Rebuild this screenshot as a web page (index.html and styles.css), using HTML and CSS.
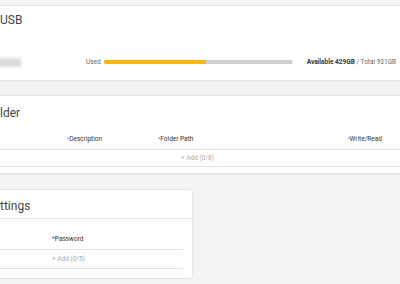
FILE: index.html
```html
<!DOCTYPE html>
<html lang="en">
<head>
  <meta charset="UTF-8" />
  <title>Storage</title>
  <link rel="stylesheet" href="styles.css">
</head>
<body>
  <div class="page">
    <div class="card card-disk">
      <h3 class="card-title">USB</h3>
      <div class="usage">
        <span class="disk-name"></span>
        <span class="used-label">Used</span>
        <div class="bar"><div class="bar-fill" style="width: 54%"></div></div>
        <span class="usage-text"><strong>Available 429GB</strong> / Total 931GB</span>
      </div>
    </div>

    <div class="card card-folder">
      <h3 class="card-title">lder</h3>
      <div class="table">
        <div class="table-head">
          <span class="col col-desc"><i>•</i>Description</span>
          <span class="col col-path"><i>•</i>Folder Path</span>
          <span class="col col-rw"><i>•</i>Write/Read</span>
        </div>
        <div class="table-add folder-add">+ Add (0/8)</div>
      </div>
    </div>

    <div class="card card-settings">
      <h3 class="card-title with-line">ttings</h3>
      <div class="settings-body">
        <div class="table-head">
          <span class="col col-pass"><i>*</i>Password</span>
        </div>
        <div class="table-add settings-add">+ Add (0/5)</div>
      </div>
    </div>
  </div>
</body>
</html>
```

FILE: styles.css
```css
body {
  margin: 0;
  background: #f3f3f3;
  font-family: Roboto, "Noto Sans", Arial, sans-serif;
  color: #333;
}
.page {
  padding-top: 5px;
  margin-left: -20px;
}
.card {
  background: white;
  border: 1px solid #e4e4e4;
  border-radius: 3px;
  box-shadow: 0 1px 2px rgba(0, 0, 0, 0.04);
}
.card-title {
  margin: 0;
  padding-left: 19px;
  font-size: 12px;
  font-weight: normal;
  line-height: 18px;
  color: #444;
}

/* Disk card */
.card-disk {
  width: 440px;
  padding: 5px 0 13px;
}
.usage {
  display: flex;
  align-items: center;
  height: 10px;
  margin-top: 28px;
  font-size: 6.5px;
  color: #666;
}
.disk-name {
  width: 22px;
  height: 9px;
  margin-left: 18px;
  background: #dcdcdc;
  filter: blur(1.5px);
}
.used-label {
  margin-left: 65px;
}
.bar {
  width: 189px;
  height: 4px;
  margin-left: 3px;
  background: #cfcfcf;
  border-radius: 2px;
  overflow: hidden;
}
.bar-fill {
  height: 100%;
  background: #fbb615;
}
.usage-text {
  margin-left: 14px;
  color: #666;
}
.usage-text strong {
  color: #333;
  font-weight: bold;
}

/* Folder card */
.card-folder {
  width: 440px;
  margin-top: 14px;
  padding: 8px 0 6px;
}
.table {
  margin-top: 7px;
}
.table-head {
  display: flex;
  align-items: center;
  height: 20px;
  border-bottom: 1px solid #e2e2e2;
  font-size: 6.5px;
  color: #333;
}
.table-head i {
  font-style: normal;
  color: #2a6ebb;
}
.col-desc {
  margin-left: 86px;
}
.col-path {
  margin-left: 56px;
}
.col-rw {
  margin-left: 154px;
}
.table-add {
  height: 16px;
  line-height: 16px;
  border-bottom: 1px solid #e2e2e2;
  font-size: 6.5px;
  color: #aaa;
}
.folder-add {
  padding-left: 200px;
}

/* Settings card */
.card-settings {
  width: 211px;
  margin-top: 15px;
  padding: 7px 0 0;
}
.card-title.with-line {
  padding-bottom: 3px;
  border-bottom: 1px solid #e6e6e6;
}
.settings-body {
  padding: 10px 9px 9px 0;
}
.col-pass {
  margin-left: 71px;
}
.settings-add {
  height: 18px;
  line-height: 18px;
  padding-left: 71px;
}
```
